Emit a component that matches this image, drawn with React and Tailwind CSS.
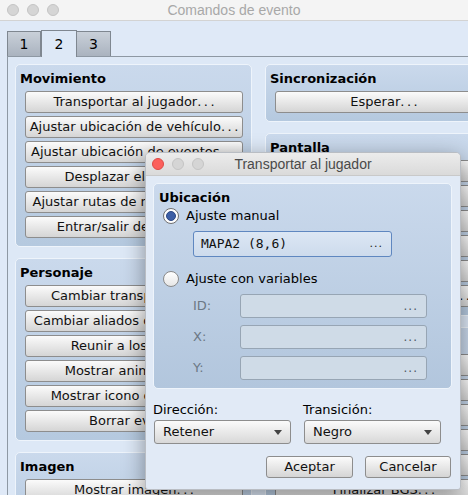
import React from 'react';

const Light = ({ color = 'gray' }) => (
  <div
    className={
      color === 'red'
        ? 'w-[12px] h-[12px] rounded-full bg-[#fc605c] border border-[#de4a45]'
        : 'w-[12px] h-[12px] rounded-full bg-[#d5d5d5] border border-[#c4c4c4]'
    }
  />
);

// the editor draws the trailing dots wider than the font does
const Dots = ({ text }) => {
  if (!text.endsWith('...')) return <span>{text}</span>;
  return (
    <span>
      {text.slice(0, -3)}
      <span className="tracking-[2.5px] mr-[-2.5px]">...</span>
    </span>
  );
};

const Btn = ({ children, className = '' }) => (
  <div
    className={`h-[22px] flex items-center justify-center rounded-[3px] border border-[#8d8d8d] bg-gradient-to-b from-[#fbfbfb] to-[#d5d5d5] text-[13px] text-[#111] whitespace-nowrap overflow-hidden ${className}`}
  >
    <Dots text={children} />
  </div>
);

const Group = ({ title, buttons }) => (
  <div className="rounded-[5px] border border-[#eef4fb] bg-gradient-to-b from-[#cad9ec] to-[#b5c9df] pt-[5px] pb-[8px]">
    <div className="h-[18px] pl-[4px] flex items-center font-bold text-[13px] text-black">{title}</div>
    <div className="mt-[3px] pl-[9px] flex flex-col gap-[3px]">
      {buttons.map((b) => (
        <Btn key={b} className="w-[218px]">{b}</Btn>
      ))}
    </div>
  </div>
);

const Radio = ({ on }) => (
  <div
    className={
      on
        ? 'w-[16px] h-[16px] rounded-full border border-[#6f6f6f] bg-white flex items-center justify-center'
        : 'w-[16px] h-[16px] rounded-full border border-[#8a8a8a] bg-gradient-to-b from-white to-[#e6e6e6]'
    }
  >
    {on && <div className="w-[10px] h-[10px] rounded-full bg-[#3d5fa6] border border-[#2d4a86]" />}
  </div>
);

const VarField = ({ label }) => (
  <div className="flex items-center h-[24px]">
    <div className="w-[86px] pl-[39px] text-[13px] text-[#6c7885]">{label}</div>
    <div className="w-[187px] h-[24px] rounded-[3px] border border-[#97a5b4] bg-[#cfdbe7] flex items-center justify-end pr-[8px] text-[12px] text-[#4f5a65] tracking-[1px]">
      ...
    </div>
  </div>
);

const Select = ({ value }) => (
  <div className="w-[137px] h-[24px] rounded-[3px] border border-[#8d8d8d] bg-gradient-to-b from-[#fbfbfb] to-[#d8d8d8] flex items-center justify-between pl-[8px] pr-[8px] text-[13px] text-[#111]">
    <span>{value}</span>
    <svg width="8" height="5" viewBox="0 0 8 5">
      <path d="M0 0 L8 0 L4 5 Z" fill="#444" />
    </svg>
  </div>
);

export default function App() {
  return (
    <div className="relative w-[468px] h-[495px] overflow-hidden bg-[#dfe9f7] font-['DejaVu_Sans',sans-serif]">
      {/* Window title bar */}
      <div className="h-[21px] border-b border-[#d3d3d3] bg-[#f4f4f4] flex items-center">
        <div className="w-[60px] pl-[7px] flex gap-[8px]">
          <Light />
          <Light />
          <Light />
        </div>
        <div className="flex-1 text-center text-[14px] text-[#a8a8a8] font-['Liberation_Sans',sans-serif]">
          Comandos de evento
        </div>
        <div className="w-[60px]" />
      </div>

      <div className="pl-[7px] pt-[9px]">
        {/* Tabs */}
        <div className="flex items-end h-[26px]">
          <div className="w-[34px] h-[25px] border border-b-0 border-[#7f8790] bg-gradient-to-b from-[#c9d0d9] to-[#aab3bf] flex items-center justify-center text-[14px] text-black">
            1
          </div>
          <div className="relative z-10 -mb-px w-[36px] h-[27px] border border-b-0 border-[#7f8790] bg-[#dde8f6] flex items-center justify-center text-[14px] text-black">
            2
          </div>
          <div className="w-[34px] h-[25px] border border-b-0 border-l-0 border-[#7f8790] bg-gradient-to-b from-[#c9d0d9] to-[#aab3bf] flex items-center justify-center text-[14px] text-black">
            3
          </div>
        </div>

        {/* Tab panel */}
        <div className="w-[600px] border-t border-l border-[#8e98a3] bg-[#dde8f6] pl-[7px] pt-[7px] flex gap-[13px]">
          <div className="w-[237px] flex flex-col gap-[11px]">
            <Group
              title="Movimiento"
              buttons={[
                'Transportar al jugador...',
                'Ajustar ubicación de vehículo...',
                'Ajustar ubicación de eventos...',
                'Desplazar el mapa...',
                'Ajustar rutas de movimiento...',
                'Entrar/salir del vehículo',
              ]}
            />
            <Group
              title="Personaje"
              buttons={[
                'Cambiar transparencia...',
                'Cambiar aliados del jugador...',
                'Reunir a los aliados',
                'Mostrar animación...',
                'Mostrar icono de globo...',
                'Borrar evento',
              ]}
            />
            <Group title="Imagen" buttons={['Mostrar imagen...', 'Mover imagen...']} />
          </div>
          <div className="w-[238px] flex flex-col gap-[11px]">
            <Group title="Sincronización" buttons={['Esperar...']} />
            <Group
              title="Pantalla"
              buttons={[
                'Fundido de salida',
                'Fundido de entrada',
                'Tintar pantalla...',
                'Destello de pantalla...',
                'Agitar pantalla...',
                'Ajustar clima ambiental...',
              ]}
            />
            <Group
              title="Audio y vídeo"
              buttons={[
                'Reproducir BGM...',
                'Finalizar BGM...',
                'Guardar BGM',
                'Reanudar BGM',
                'Reproducir BGS...',
                'Finalizar BGS...',
              ]}
            />
          </div>
        </div>
      </div>

      {/* Dialog */}
      <div className="absolute left-[145px] top-[152px] w-[316px] h-[338px] rounded-t-[5px] rounded-b-[3px] overflow-hidden bg-[#e1eaf6] shadow-[0_6px_22px_rgba(0,0,0,0.4)] border border-[#b9bdc3] flex flex-col">
        <div className="h-[23px] shrink-0 border-b border-[#c9c9c9] bg-gradient-to-b from-[#ececec] to-[#dadada] flex items-center">
          <div className="w-[60px] pl-[6px] flex gap-[8px]">
            <Light color="red" />
            <Light />
            <Light />
          </div>
          <div className="flex-1 text-center text-[14px] text-[#4a4a4a] font-['Liberation_Sans',sans-serif]">
            Transportar al jugador
          </div>
          <div className="w-[60px]" />
        </div>

        <div className="px-[7px] pt-[7px]">
          <div className="w-[299px] rounded-[5px] border border-[#eef4fb] bg-gradient-to-b from-[#cad9ec] to-[#b2c6dd] pt-[5px] pb-[8px]">
            <div className="h-[18px] pl-[5px] flex items-center font-bold text-[13px] text-black">Ubicación</div>
            <div className="h-[18px] pl-[9px] flex items-center gap-[7px] text-[13px] text-black">
              <Radio on />
              <span>Ajuste manual</span>
            </div>
            <div className="mt-[6px] ml-[39px] w-[199px] h-[26px] rounded-[3px] border border-[#5f87c0] bg-gradient-to-b from-[#dce7f4] to-[#cddbec] flex items-center justify-between pl-[7px] pr-[8px]">
              <span className="font-['DejaVu_Sans_Mono',monospace] text-[13px] text-[#111]">MAPA2 (8,6)</span>
              <span className="text-[11px] text-[#222] tracking-[1px]">...</span>
            </div>
            <div className="mt-[13px] h-[18px] pl-[9px] flex items-center gap-[7px] text-[13px] text-black">
              <Radio />
              <span>Ajuste con variables</span>
            </div>
            <div className="mt-[6px] flex flex-col gap-[7px]">
              <VarField label="ID:" />
              <VarField label="X:" />
              <VarField label="Y:" />
            </div>
          </div>

          <div className="mt-[12px] flex">
            <div className="w-[150px]">
              <div className="h-[18px] flex items-center text-[13px] text-black">Dirección:</div>
              <div className="mt-[1px] ml-[1px]">
                <Select value="Retener" />
              </div>
            </div>
            <div className="w-[150px]">
              <div className="h-[18px] flex items-center text-[13px] text-black">Transición:</div>
              <div className="mt-[1px] ml-[1px]">
                <Select value="Negro" />
              </div>
            </div>
          </div>

          <div className="mt-[12px] flex justify-end gap-[12px] pr-[2px]">
            <Btn className="w-[87px]">Aceptar</Btn>
            <Btn className="w-[86px]">Cancelar</Btn>
          </div>
        </div>
      </div>
    </div>
  );
}
